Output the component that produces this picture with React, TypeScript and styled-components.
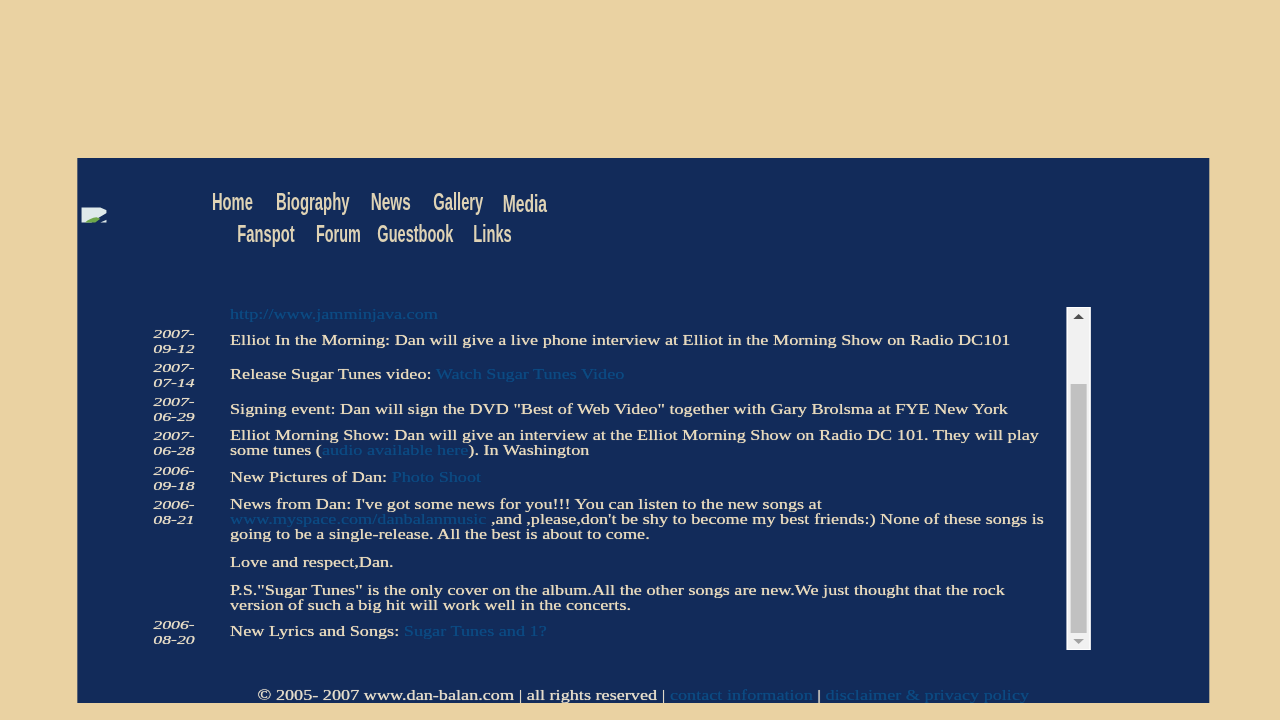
import React from "react";
import styled, { createGlobalStyle } from "styled-components";

const Global = createGlobalStyle`
  html, body { margin: 0; padding: 0; height: 720px; overflow: hidden; background: #ead2a2; }
`;

/* The reference is a 960-wide page stretched to 1280 wide. */
const Stage = styled.div`
  width: 960px;
  height: 720px;
  padding: 158px 0 0 58px;
  box-sizing: border-box;
  transform: scaleX(1.3333);
  transform-origin: 0 0;
  filter: blur(0.45px);
  font-family: "Liberation Serif", "Times New Roman", serif;
  font-size: 13.65px;
  line-height: 15px;
  color: #e8dabd;
  text-shadow: 0 0 0.6px currentColor;
`;

const Panel = styled.div`
  width: 849px;
  height: 545px;
  background: #122b5a;
  overflow: hidden;
`;

const Header = styled.header`
  height: 149px;
  display: flex;
  align-items: flex-start;
`;

const BrokenImage = styled.svg`
  width: 19px;
  height: 16px;
  margin: 49px 1px 0 3px;
  flex: none;
`;

const Nav = styled.nav`
  margin: 28px 0 0 78px;
  width: 258px;
  display: flex;
  flex-direction: column;
`;

const NavRow = styled.div<{ $left: number }>`
  display: flex;
  padding-left: ${(p) => p.$left}px;
  height: 32px;
  align-items: center;
`;

const NavLink = styled.a<{ $w: number; $sx: number; $drop?: number }>`
  display: block;
  flex: none;
  width: ${(p) => p.$w}px;
  white-space: nowrap;
  font-family: "Liberation Sans", Arial, sans-serif;
  font-weight: 700;
  font-size: 24px;
  line-height: 30px;
  color: #dfd3b5;
  text-shadow: none;
  transform: translateY(${(p) => p.$drop ?? 0}px) scaleX(${(p) => p.$sx});
  transform-origin: 0 50%;
`;

const Main = styled.main`
  height: 343px;
  display: flex;
  padding-left: 57px;
`;

const Feed = styled.div`
  width: 685.25px;
  height: 343px;
  overflow: hidden;
  display: flex;
  flex-direction: column;
  gap: 4.3px;
`;

const TopLink = styled.a`
  display: block;
  margin: 0 0 -0.8px 57.5px;
  height: 15px;
  flex: none;
  color: #0c4a82;
`;

const Row = styled.article<{ $top?: boolean }>`
  display: flex;
  flex: none;
  align-items: ${(p) => (p.$top ? "flex-start" : "center")};
  min-height: 30px;
`;

const DateCell = styled.time`
  flex: none;
  width: 33px;
  margin-right: 24.5px;
  font-style: italic;
  font-size: 13.3px;
  line-height: 15px;
  color: #e6dcc6;
  align-self: flex-start;
`;

const Body = styled.div`
  width: 620px;
`;

const Para = styled.p`
  margin: 0 0 12.8px;
  &:last-child { margin-bottom: 0; }
`;

const A = styled.a`
  color: #0c4a82;
`;

const Scrollbar = styled.div`
  width: 18px;
  height: 343px;
  flex: none;
  box-sizing: border-box;
  background: #f1f1f1;
  border: 1px solid #fff;
  display: flex;
  flex-direction: column;
  align-items: center;
`;

const ArrowBox = styled.div`
  height: 16px;
  display: flex;
  align-items: center;
  justify-content: center;
  flex: none;
`;

const Arrow = styled.div<{ $down?: boolean; $dim?: boolean }>`
  width: 0;
  height: 0;
  border-left: 4px solid transparent;
  border-right: 4px solid transparent;
  ${(p) =>
    p.$down
      ? `border-top: 5px solid ${p.$dim ? "#a3a3a3" : "#505050"};`
      : `border-bottom: 5px solid ${p.$dim ? "#a3a3a3" : "#505050"};`}
`;

const Track = styled.div`
  flex: 1;
  width: 100%;
  padding: 60px 2px 0;
  box-sizing: border-box;
`;

const Thumb = styled.div`
  height: 249px;
  background: #c1c1c1;
`;

const Footer = styled.footer`
  margin-top: 38px;
  text-align: center;
  line-height: 15px;
  color: #e4dccb;
  white-space: nowrap;
`;

const rows: { date: string; top?: boolean; body: React.ReactNode }[] = [
  { date: "2007-09-12", body: <>Elliot In the Morning: Dan will give a live phone interview at Elliot in the Morning Show on Radio DC101</> },
  { date: "2007-07-14", body: <>Release Sugar Tunes video: <A>Watch Sugar Tunes Video</A></> },
  { date: "2007-06-29", body: <>Signing event: Dan will sign the DVD "Best of Web Video" together with Gary Brolsma at FYE New York</> },
  { date: "2007-06-28", top: true, body: <>Elliot Morning Show: Dan will give an interview at the Elliot Morning Show on Radio DC 101. They will play some tunes (<A>audio available here</A>). In Washington</> },
  { date: "2006-09-18", body: <>New Pictures of Dan: <A>Photo Shoot</A></> },
  {
    date: "2006-08-21",
    top: true,
    body: (
      <>
        <Para>News from Dan: I've got some news for you!!! You can listen to the new songs at <A>www.myspace.com/danbalanmusic</A> ,and ,please,don't be shy to become my best friends:) None of these songs is going to be a single-release. All the best is about to come.</Para>
        <Para>Love and respect,Dan.</Para>
        <Para>P.S."Sugar Tunes" is the only cover on the album.All the other songs are new.We just thought that the rock version of such a big hit will work well in the concerts.</Para>
      </>
    ),
  },
  { date: "2006-08-20", body: <>New Lyrics and Songs: <A>Sugar Tunes and 1?</A></> },
];

export default function App() {
  return (
    <>
      <Global />
      <Stage>
        <Panel>
          <Header>
            <BrokenImage viewBox="0 0 20 16" aria-label="broken image">
              <path d="M0 0h15l5 3v3l-9 7-3 3H0z" fill="#dfeaea" />
              <path d="M3 16c2-3 6-5 9-5.5l3 1.5-4 4z" fill="#6fa84a" />
              <path d="M15 16l5-3v3z" fill="#dfeaea" />
            </BrokenImage>
            <Nav>
              <NavRow $left={0}>
                <NavLink $w={48} $sx={0.46}>Home</NavLink>
                <NavLink $w={71.25} $sx={0.465}>Biography</NavLink>
                <NavLink $w={46.5} $sx={0.48}>News</NavLink>
                <NavLink $w={51.75} $sx={0.46}>Gallery</NavLink>
                <NavLink $w={34} $sx={0.49} $drop={2}>Media</NavLink>
              </NavRow>
              <NavRow $left={19}>
                <NavLink $w={58.5} $sx={0.46}>Fanspot</NavLink>
                <NavLink $w={46.5} $sx={0.45}>Forum</NavLink>
                <NavLink $w={71.5} $sx={0.455}>Guestbook</NavLink>
                <NavLink $w={29} $sx={0.46}>Links</NavLink>
              </NavRow>
            </Nav>
          </Header>
          <Main>
            <Feed>
              <TopLink>http://www.jamminjava.com</TopLink>
              {rows.map((r) => (
                <Row key={r.date} $top={r.top}>
                  <DateCell>{r.date}</DateCell>
                  <Body>{r.body}</Body>
                </Row>
              ))}
            </Feed>
            <Scrollbar>
              <ArrowBox><Arrow /></ArrowBox>
              <Track><Thumb /></Track>
              <ArrowBox><Arrow $down $dim /></ArrowBox>
            </Scrollbar>
          </Main>
          <Footer>
            © 2005- 2007 www.dan-balan.com | all rights reserved | <A>contact information</A> | <A>disclaimer &amp; privacy policy</A>
          </Footer>
        </Panel>
      </Stage>
    </>
  );
}
